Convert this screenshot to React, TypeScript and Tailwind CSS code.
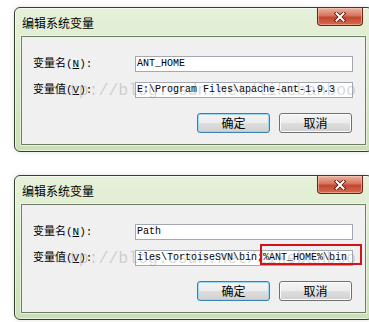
import React from 'react';

interface EnvDialogProps {
  name: string;
  value: string;
  highlight?: boolean;
}

const uiFont = "font-['Liberation_Mono','Noto_Sans_CJK_SC',monospace]";
const cjkFont = "font-['Noto_Sans_CJK_SC','Noto_Sans',sans-serif]";

const CloseGlyph = () => (
  <svg width="12" height="10" viewBox="0 0 12 10">
    <path d="M2.5 1.5 L9.5 8.5 M9.5 1.5 L2.5 8.5" stroke="#5a1c10" strokeWidth="3.8" strokeLinecap="square" />
    <path d="M2.5 1.5 L9.5 8.5 M9.5 1.5 L2.5 8.5" stroke="#ffffff" strokeWidth="2" strokeLinecap="square" />
  </svg>
);

const WinButton: React.FC<{ label: string; primary?: boolean }> = ({ label, primary }) => (
  <button
    className={`w-[73px] h-[20px] rounded-[3px] border ${
      primary
        ? 'border-[#3c7fb1] shadow-[inset_0_0_0_1px_#9fd4f2]'
        : 'border-[#707070] shadow-[inset_0_0_0_1px_#fcfcfc]'
    } bg-[linear-gradient(to_bottom,#f4f4f4_0%,#ececec_48%,#dedede_52%,#d0d0d0_100%)] flex items-center justify-center text-[12px] leading-none text-black ${cjkFont}`}
  >
    {label}
  </button>
);

const EnvDialog: React.FC<EnvDialogProps> = ({ name, value, highlight }) => (
  <div className="relative w-[359px] h-[145px] shrink-0 flex flex-col rounded-[6px] border border-[#34402f] bg-gradient-to-b from-[#e6f1da] via-[#d7e9c5] to-[#c9dfb3] shadow-[inset_0_0_0_1px_rgba(255,255,255,0.6),0_0_5px_rgba(0,0,0,0.12)]">
    {/* title bar */}
    <div className="h-[28px] flex items-start pl-[7px] pr-[9px]">
      <span className={`mt-[8px] text-[12px] leading-[14px] text-black ${cjkFont}`}>编辑系统变量</span>
      <div className="ml-auto w-[46px] h-[18px] rounded-b-[4px] border border-t-0 border-[#6a2415] bg-[linear-gradient(to_bottom,#eab3a2_0%,#d9745c_45%,#c2472f_55%,#d66a4f_100%)] shadow-[inset_0_0_0_1px_rgba(255,220,200,0.45)] flex items-center justify-center">
        <CloseGlyph />
      </div>
    </div>

    {/* client area */}
    <div className="mx-[6px] border border-[#6f7d68] bg-[#f0f0f0] pt-[19px] pl-[11px] pr-[12px] pb-[11px] shadow-[0_0_0_1px_rgba(255,255,255,0.5)]">
      <div className="flex items-center h-[16px]">
        <span className={`w-[102px] text-[11px] leading-none text-black ${uiFont}`}>
          变量名(<span className="underline">N</span>):
        </span>
        <div className={`w-[218px] h-[16px] border border-[#a4a8b0] bg-white pl-[1px] text-[10px] leading-[14px] text-black whitespace-nowrap overflow-hidden ${uiFont}`}>
          {name}
        </div>
      </div>
      <div className="flex items-center h-[16px] mt-[10px]">
        <span className={`w-[102px] text-[11px] leading-none text-black ${uiFont}`}>
          变量值(<span className="underline">V</span>):
        </span>
        <div className={`w-[218px] h-[16px] border border-[#a4a8b0] bg-white pl-[1px] text-[10px] leading-[14px] text-black whitespace-nowrap overflow-hidden ${uiFont}`}>
          {value}
        </div>
      </div>
      <div className="flex justify-end gap-[9px] mt-[15px] pr-[1px]">
        <WinButton label="确定" primary />
        <WinButton label="取消" />
      </div>
    </div>

    {/* blog watermark */}
    <span className="absolute left-[34px] top-[75px] z-10 pointer-events-none whitespace-nowrap text-[16.5px] leading-none text-[rgba(110,110,110,0.28)] font-['Liberation_Mono',monospace]">
      http://blog.csdn.net/likebanboo
    </span>

    {highlight && (
      <div className="absolute left-[245px] top-[68px] w-[102px] h-[21px] border-2 border-[#d4121a] z-20" />
    )}
  </div>
);

export default function App() {
  return (
    <div className="w-[369px] h-[322px] overflow-hidden bg-white pl-[14px] pt-[7px] flex flex-col gap-[23px]">
      <EnvDialog name="ANT_HOME" value="E:\Program Files\apache-ant-1.9.3" />
      <EnvDialog name="Path" value="iles\TortoiseSVN\bin;%ANT_HOME%\bin" highlight />
    </div>
  );
}
